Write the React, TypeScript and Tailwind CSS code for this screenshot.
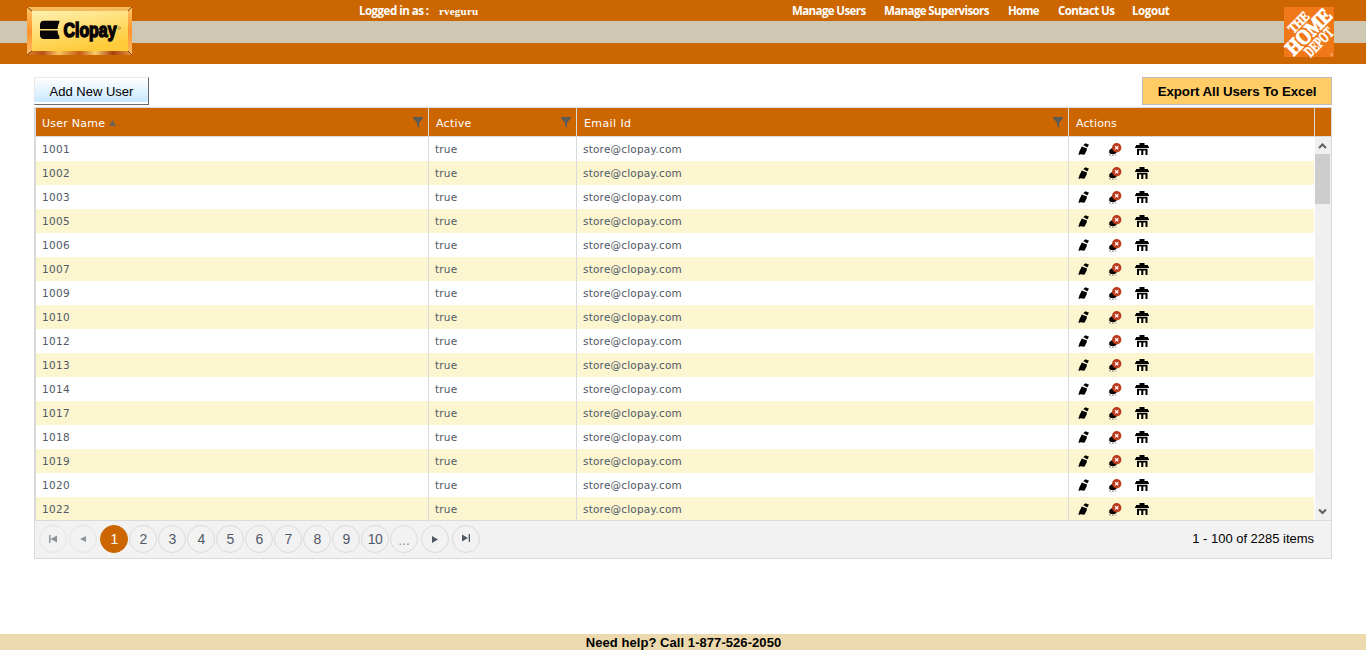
import React from "react";

const users = ["1001","1002","1003","1005","1006","1007","1009","1010","1012","1013","1014","1017","1018","1019","1020","1022"];
const pages = ["1","2","3","4","5","6","7","8","9","10"];

function Funnel() {
  return (
    <svg width="10" height="12" viewBox="0 0 10 12" className="shrink-0">
      <path d="M0 0h10v1L6 6v5L4 9V6L0 1z" fill="#5c5b57" />
    </svg>
  );
}

function Pencil() {
  return (
    <svg width="12" height="13" viewBox="0 0 12 13">
      <path d="M3.800 3.600 9 5.400 8.700 7.500 6.400 11.700 2.700 11.200 .4 11.900 1.400 8.300z" fill="#000" />
      <path d="M5.300 1.900 7.600 .2 11 1.800 9.200 4.400z" fill="#000" />
    </svg>
  );
}

function Deactivate() {
  return (
    <svg width="14" height="14" viewBox="0 0 14 14">
      <path d="M.2 7.200 3 5l5 4-2 2H1.500L.2 9.500z" fill="#0b0606" />
      <path d="M0 12h1.500M3 12h2M6.200 12h1" stroke="#333" strokeWidth=".7" />
      <circle cx="7.700" cy="4.800" r="4.700" fill="#bd3a1c" />
      <path d="m6.100 3.200 3.200 3.200m0-3.200L6.100 6.400" stroke="#fff" strokeWidth="1.300" />
    </svg>
  );
}

function Trash() {
  return (
    <svg width="14" height="12" viewBox="0 0 14 12" fill="#000">
      <path d="M4.500 0h5v2H13v1.500h1V5H0V3.500h1V2h3.500zM2 5.800h10.500V12H10.500V7.500H8.300V12H6.300V7.500H4V12H2z" />
    </svg>
  );
}

function HomeDepot() {
  return (
    <svg width="50" height="50" viewBox="0 0 50 50" className="overflow-visible">
      <rect width="50" height="50" fill="#f07818" />
      <g transform="rotate(-45 25 25)" fill="#fff" stroke="#fff" fontFamily="Liberation Serif, serif" fontWeight="700">
        <text x="12.500" y="15.500" fontSize="14" textLength="24" lengthAdjust="spacingAndGlyphs" strokeWidth=".6">THE</text>
        <text x="-3" y="31.500" fontSize="21" textLength="56" lengthAdjust="spacingAndGlyphs" strokeWidth="1.200">HOME</text>
        <text x="8" y="44.300" fontSize="15.500" textLength="34" lengthAdjust="spacingAndGlyphs" strokeWidth=".6">DEPOT</text>
      </g>
      <circle cx="47.500" cy="47.500" r="1" fill="none" stroke="#fbd0a8" strokeWidth=".7" />
    </svg>
  );
}

function Clopay() {
  return (
    <svg width="105" height="48" viewBox="0 0 105 48">
      <defs>
        <linearGradient id="face" x1="0" y1="0" x2=".4" y2="1">
          <stop stopColor="#fff1b0" /><stop offset="1" stopColor="#ffcb3a" />
        </linearGradient>
        <linearGradient id="rim">
          <stop stopColor="#d98324" /><stop offset=".15" stopColor="#b9501a" /><stop offset=".3" stopColor="#f8c65c" /><stop offset=".5" stopColor="#c55a12" /><stop offset=".65" stopColor="#f8cd68" /><stop offset=".82" stopColor="#a93d0d" /><stop offset="1" stopColor="#e49b3c" />
        </linearGradient>
        <linearGradient id="side" x2="0" y2="1">
          <stop stopColor="#ffc766" /><stop offset=".5" stopColor="#ff922b" /><stop offset="1" stopColor="#ffbd64" />
        </linearGradient>
      </defs>
      <path d="M0 0h105l-4 4H5z" fill="#f4ba59" />
      <path d="M0 48h105l-4-4H5z" fill="url(#rim)" />
      <path d="M0 0l5 4v40l-5 4zM105 0l-4 4v40l4 4z" fill="url(#side)" />
      <path d="M0 0l5 4M105 0l-4 4M0 48l5-4M105 48l-4-4" stroke="#7d3812" />
      <rect x="5" y="4" width="96" height="40" fill="url(#face)" />
      <path d="M17 13.700h15.300v2Q30.500 18 30.500 22H13v-4q0-4.300 4-4.300zM13 23.500h17.500q0 3.500 1.800 5.500v3H17q-4 0-4-4z" fill="#090406" />
      <text x="36.500" y="29.500" fontFamily="Liberation Sans, sans-serif" fontSize="19.500" fontWeight="700" textLength="53" lengthAdjust="spacingAndGlyphs" fill="#090406" stroke="#090406" strokeWidth="1.500">Clopay</text>
      <circle cx="92.300" cy="21.300" r="1.200" fill="none" stroke="#876b2c" strokeWidth=".7" />
    </svg>
  );
}

const headCols = "grid grid-cols-[393px_148px_492px_246px]";
const bodyCols = "grid w-[1278px] grid-cols-[393px_148px_492px_245px]";

export default function App() {
  return (
    <div className="flex h-[654px] w-[1366px] flex-col overflow-hidden bg-white font-['Liberation_Sans',Arial,sans-serif] text-black">
      <header className="flex h-16 shrink-0 bg-[linear-gradient(#cc6600_21px,#cec8b2_21px,#cec8b2_43px,#cc6600_43px)] font-['Open_Sans',sans-serif] text-[11.5px] font-bold leading-[22px] text-white">
        <div className="w-[359px] pl-[27px] pt-[7px]"><Clopay /></div>
        <div className="flex w-[433px] gap-[10px]">
          <span className="w-[70px] whitespace-nowrap tracking-[-0.5px]">Logged in as :</span>
          <span className="font-['Liberation_Serif',serif] text-[11px] tracking-[0.2px]">rveguru</span>
        </div>
        <nav className="flex w-[492px] whitespace-nowrap tracking-[-0.6px]">
          <a className="w-[92px]">Manage Users</a>
          <a className="w-[124px]">Manage Supervisors</a>
          <a className="w-[50px] tracking-[-0.8px]">Home</a>
          <a className="w-[74px]">Contact Us</a>
          <a className="tracking-[-0.4px]">Logout</a>
        </nav>
        <div className="pt-[7px]"><HomeDepot /></div>
      </header>

      <main className="h-[570px] shrink-0 px-[34px] pt-[13px]">
        <div className="flex h-[30px] w-[1298px] items-start justify-between">
          <button className="h-7 w-[115px] border border-b-[#696969] border-l-[#e8e8e8] border-r-[#696969] border-t-[#e8e8e8] bg-[linear-gradient(#ffffff,#c8e8ff_92%,#ffffff_92%)] pt-[2px] text-[13px]">Add New User</button>
          <button className="h-7 w-[190px] border border-[#bbbbbb] bg-[#ffcc66] pt-[2px] text-[13.33px] font-bold tracking-[-0.08px]">Export All Users To Excel</button>
        </div>
        <section className="h-[452px] w-[1298px] border border-[#dadadc]">
          <div className="flex h-[29px] border-b border-l border-[#dadadc] bg-[#cc6600] font-['DejaVu_Sans',Verdana,sans-serif] text-[11px] leading-[31px] tracking-[0.25px] text-white">
            <div className={headCols}>
              <div className="flex h-7 justify-between border-r border-[#dadadc] pl-[6px] pr-[5px]">
                <span className="flex gap-1">User Name
                  <svg width="7" height="6" viewBox="0 0 7 6" className="mt-3"><path d="M3.500 0 7 6H0z" fill="#68645b" /></svg>
                </span>
                <span className="pt-[9px]"><Funnel /></span>
              </div>
              <div className="flex h-7 justify-between border-r border-[#dadadc] pl-[7px] pr-[5px]"><span>Active</span><span className="pt-[9px]"><Funnel /></span></div>
              <div className="flex h-7 justify-between border-r border-[#dadadc] pl-[7px] pr-[5px]"><span className="tracking-[0.4px]">Email Id</span><span className="pt-[9px]"><Funnel /></span></div>
              <div className="h-7 border-r border-[#dadadc] pl-[7px] tracking-[0.1px]">Actions</div>
            </div>
          </div>
          <div className="flex h-[384px] border-b border-l border-[#dadadc]">
            <div className="h-[383px] w-[1279px] overflow-hidden font-['DejaVu_Sans',Verdana,sans-serif] text-[10.5px] leading-[25px] tracking-[0.2px] text-[#515967]">
              {users.map((u) => (
                <div key={u} className={`${bodyCols} h-6 even:bg-[#fbf5d0]`}>
                  <div className="h-6 border-r border-[#dadadc] pl-[6px] tracking-[0.3px]">{u}</div>
                  <div className="h-6 border-r border-[#dadadc] pl-[6px]">true</div>
                  <div className="h-6 border-r border-[#dadadc] pl-[6px]">store@clopay.com</div>
                  <div className="flex h-6 pl-[9px] pt-[6px]">
                    <span className="w-[31px]"><Pencil /></span>
                    <span className="w-[26px]"><Deactivate /></span>
                    <Trash />
                  </div>
                </div>
              ))}
            </div>
            <div className="flex w-4 flex-col bg-[#f0f0f0]">
              <svg width="16" height="17" viewBox="0 0 16 17"><path d="m4 11 3.500-3.500L11 11" fill="none" stroke="#606060" strokeWidth="2" /></svg>
              <div className="h-[50px] w-[15px] bg-[#cdcdcd]" />
              <svg width="16" height="17" viewBox="0 0 16 17" className="mt-auto"><path d="m4 6.500 3.500 3.500L11 6.500" fill="none" stroke="#606060" strokeWidth="2" /></svg>
            </div>
          </div>
          <div className="flex h-[37px] items-start bg-[#f2f2f2] pl-1 pr-[17px] pt-1 text-[#515967]">
            <span className="mr-[2px] flex size-7 items-center justify-center rounded-full border border-[#e4e4e6]"><svg width="8" height="8" viewBox="0 0 8 8" fill="#8b949b"><path d="M0 0h1.500v8H0zM8 .5v7L1.500 4z" /></svg></span>
            <span className="mr-[3px] flex size-7 items-center justify-center rounded-full border border-[#e4e4e6]"><svg width="6" height="6" viewBox="0 0 6 6" fill="#8b949b"><path d="M6 0v6L0 3z" /></svg></span>
            <div className="flex gap-px text-[14px] tracking-[-0.6px]">
              {pages.map((p) => (
                <span key={p} className="flex size-7 items-center justify-center rounded-full border border-[#dadadc] pt-px first:border-[#cc6600] first:bg-[#cc6600] first:text-white">{p}</span>
              ))}
              <span className="flex size-7 items-center justify-center rounded-full border border-[#dadadc] pt-[2px] tracking-normal text-[#8b949b]">...</span>
            </div>
            <span className="ml-[3px] flex size-7 items-center justify-center rounded-full border border-[#dadadc]"><svg width="6" height="7" viewBox="0 0 6 7" fill="#515967"><path d="M0 0v7l6-3.500z" /></svg></span>
            <span className="ml-[3px] flex size-7 items-center justify-center rounded-full border border-[#dadadc] pb-[2px]"><svg width="8" height="8" viewBox="0 0 8 8" fill="#515967"><path d="M0 .5v7L6 4zM6.700 0H8v8H6.700z" /></svg></span>
            <span className="ml-auto text-[13px] leading-[28px] tracking-[-0.02px] text-black">1 - 100 of 2285 items</span>
          </div>
        </section>
      </main>
      <footer className="h-4 shrink-0 bg-[#ecd9ad] pl-px text-center text-[13px] font-bold leading-[17px] tracking-[0.06px]">Need help? Call 1-877-526-2050</footer>
    </div>
  );
}
